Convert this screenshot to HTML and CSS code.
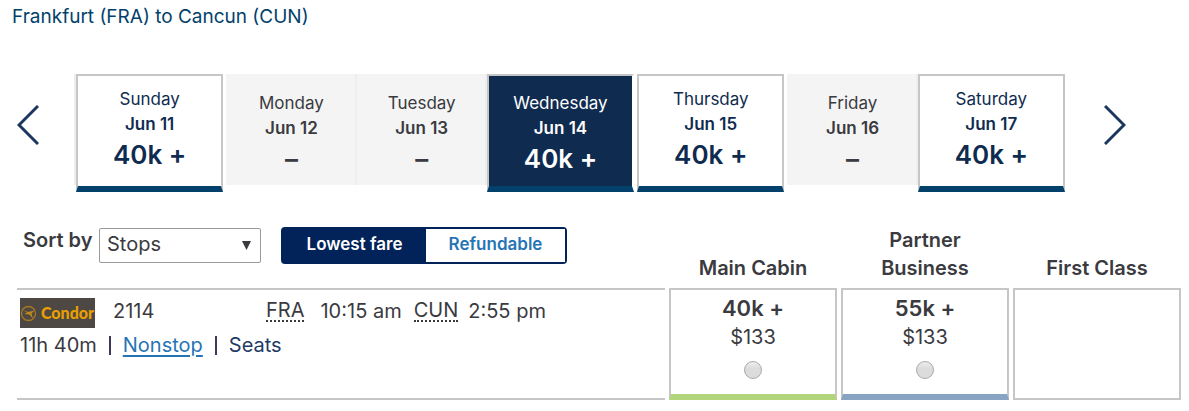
FILE: index.html
```html
<!DOCTYPE html>
<html lang="en">
<head>
<meta charset="utf-8">
<meta name="viewport" content="width=device-width, initial-scale=1">
<title>Frankfurt (FRA) to Cancun (CUN)</title>
<link rel="stylesheet" href="styles.css">
</head>
<body>
<main>
  <h1 class="route">Frankfurt (FRA) to Cancun (CUN)</h1>

  <nav class="calendar" aria-label="Departure date">
    <button class="arrow" type="button" aria-label="Previous days">
      <svg width="22" height="40" viewBox="0 0 22 40"><path d="M21 1 2 20l19 19"/></svg>
    </button>
    <div class="days">
      <button class="day open" type="button"><span>Sunday</span><b>Jun 11</b><strong>40k +</strong></button>
      <button class="day closed" type="button"><span>Monday</span><b>Jun 12</b><strong>–</strong></button>
      <button class="day closed" type="button"><span>Tuesday</span><b>Jun 13</b><strong>–</strong></button>
      <button class="day open selected" type="button" aria-current="date"><span>Wednesday</span><b>Jun 14</b><strong>40k +</strong></button>
      <button class="day open" type="button"><span>Thursday</span><b>Jun 15</b><strong>40k +</strong></button>
      <button class="day closed" type="button"><span>Friday</span><b>Jun 16</b><strong>–</strong></button>
      <button class="day open" type="button"><span>Saturday</span><b>Jun 17</b><strong>40k +</strong></button>
    </div>
    <button class="arrow" type="button" aria-label="Next days">
      <svg width="22" height="40" viewBox="0 0 22 40"><path d="M1 1l19 19L1 39"/></svg>
    </button>
  </nav>

  <table class="results">
    <colgroup><col><col class="fare-col"><col class="fare-col"><col class="fare-col"></colgroup>
    <thead>
      <tr>
        <td class="tools">
          <div class="toolbar">
            <label for="sort">Sort by</label>
            <div class="picker">
              <select id="sort"><option>Stops</option></select>
              <svg width="9" height="9" viewBox="0 0 9 9"><path d="M0 0h9L4.500 9z"/></svg>
            </div>
            <div class="toggle">
              <button class="on" type="button" aria-pressed="true">Lowest fare</button>
              <button type="button" aria-pressed="false">Refundable</button>
            </div>
          </div>
        </td>
        <th scope="col">Main Cabin</th>
        <th scope="col">Partner<br>Business</th>
        <th scope="col">First Class</th>
      </tr>
    </thead>
    <tbody>
      <tr>
        <td class="flight">
          <div class="leg">
            <svg class="logo" width="75" height="30" viewBox="0 0 75 30" role="img" aria-label="Condor">
              <rect width="75" height="30" fill="#4d4844"/>
              <circle cx="8.500" cy="15.500" r="7" fill="none" stroke="#a87a20" stroke-width="1.300"/>
              <path d="M2.500 12l5.500 2 6.500-1.500-3 3 1.500 4.500-2.500-2-1-1.500-5-.5 2.500-1.500z" fill="#c08a1a"/>
              <text x="21" y="21">Condor</text>
            </svg>
            <span class="number">2114</span>
            <abbr title="Frankfurt">FRA</abbr>
            <span class="depart">10:15 am</span>
            <abbr title="Cancun">CUN</abbr>
            <span class="arrive">2:55 pm</span>
          </div>
          <div class="facts">
            <span>11h 40m</span><i></i><a class="stops" href="#">Nonstop</a><i></i><a class="seats" href="#">Seats</a>
          </div>
        </td>
        <td class="fare main">
          <label><strong>40k +</strong><span>$133</span><input type="radio" name="fare"></label>
        </td>
        <td class="fare business">
          <label><strong>55k +</strong><span>$133</span><input type="radio" name="fare"></label>
        </td>
        <td class="fare"></td>
      </tr>
    </tbody>
  </table>
</main>
</body>
</html>
```

FILE: styles.css
```css
* { box-sizing: border-box; }

body {
  margin: 0;
  background: #fff;
  color: #3a3a3f;
  font-family: Inter, "Liberation Sans", sans-serif;
  font-size: 20px;
}

button, select { font-family: inherit; color: inherit; }

.route {
  margin: 0;
  padding: 5px 12px 0;
  color: #02416b;
  font-size: 19px;
  font-weight: 400;
  line-height: 24px;
}

.calendar {
  display: flex;
  margin: 45px 63px 0 17px;
}

.arrow {
  flex: none;
  align-self: flex-start;
  margin-top: 31px;
  padding: 0;
  border: 0;
  background: none;
}

.arrow svg { display: block; }

.arrow path {
  fill: none;
  stroke: #1c375f;
  stroke-width: 3;
}

.days {
  display: flex;
  flex: 1;
  align-items: flex-start;
  margin: 0 39px 0 35px;
  padding-left: 2px;
  background: linear-gradient(#eee, #eee) 0 0 / 2px 111px no-repeat;
}

.day {
  display: flex;
  flex: 130 1 130px;
  flex-direction: column;
  align-items: center;
  min-width: 0;
  height: 111px;
  padding: 17px 0 0;
  border: 0;
  background: #f4f4f4;
  text-align: center;
}

.closed { box-shadow: inset -2px 0 #eee; }

.day span { font-size: 17px; line-height: 25px; }
.day b { font-size: 17px; font-weight: 600; line-height: 25px; }
.day strong { font-size: 26px; font-weight: 600; line-height: 36px; }

.open {
  flex: 147 1 147px;
  height: 118px;
  padding-top: 11px;
  border: 2px solid #c6c6c6;
  border-bottom: 6px solid #02416b;
  background: #fff;
  color: #0f2b50;
}

.open + .day { margin-left: 3px; }

.selected {
  padding-top: 15px;
  border-right-color: #fff;
  background: #0f2b50;
  color: #fff;
}

.results {
  width: calc(100% - 17px);
  margin: 30px 4px 0 13px;
  border-spacing: 4px;
  table-layout: fixed;
}

.fare-col { width: 168px; }

.results td, .results th { padding: 0; }

.results th {
  padding-bottom: 2px;
  font-size: 20px;
  font-weight: 600;
  line-height: 28px;
  vertical-align: bottom;
}

.tools { height: 58px; vertical-align: top; }

.results .tools { padding-top: 1px; }

.toolbar {
  display: flex;
  align-items: flex-start;
  padding-left: 6px;
}

.toolbar label {
  width: 76px;
  font-size: 20px;
  font-weight: 600;
  line-height: 26px;
}

.picker {
  display: grid;
  align-items: center;
  width: 162px;
  margin-top: 1px;
}

.picker > * { grid-area: 1 / 1; }

.picker select {
  width: 100%;
  height: 35px;
  padding: 0 7px 4px;
  border: 1px solid #999;
  border-radius: 2px;
  appearance: none;
  background: #fff;
  font-size: 20px;
}

.picker svg {
  justify-self: end;
  margin-right: 10px;
  fill: #3a3a3f;
  pointer-events: none;
}

.toggle {
  display: flex;
  width: 286px;
  height: 37px;
  margin-left: 20px;
  border: 2px solid #01235a;
  border-radius: 4px;
}

.toggle button {
  flex: 139 1 0;
  padding: 0 0 3px;
  border: 0;
  background: #fff;
  color: #2774b5;
  font-size: 17px;
  font-weight: 600;
}

.toggle .on {
  flex-grow: 143;
  background: #01235a;
  color: #fff;
}

.flight {
  height: 112px;
  border-top: 2px solid #c6c6c6;
  border-bottom: 2px solid #c6c6c6;
  vertical-align: top;
}

.leg {
  display: flex;
  align-items: center;
  height: 38px;
  padding: 8px 0 0 3px;
  line-height: 24px;
}

.logo text {
  fill: #e8a000;
  font-family: Lato, sans-serif;
  font-size: 16px;
  font-weight: 900;
}

.leg > span, .leg > abbr { margin-top: -4px; }

.number { width: 153px; margin-left: 18px; }

abbr { border-bottom: 2px dotted #3a3a3f; text-decoration: none; line-height: 20px; }

.depart { margin: 0 12px 0 16px; }
.arrive { margin-left: 10px; }

.facts {
  display: flex;
  align-items: center;
  padding: 5px 0 0 3px;
  line-height: 24px;
}

.facts i {
  width: 2px;
  height: 19px;
  margin: 0 12px;
  background: #3a3a5a;
}

.stops { color: #2774b5; text-underline-offset: 3px; text-decoration-thickness: 2px; }
.seats { color: #1f3a66; text-decoration: none; }

.fare {
  border: 2px solid #c6c6c6;
  text-align: center;
  vertical-align: top;
}

.main { border-bottom: 6px solid #b2d57c; }
.business { border-bottom: 6px solid #88a4c2; }

.fare label {
  display: flex;
  flex-direction: column;
  align-items: center;
  padding-top: 4px;
}

.fare strong { font-size: 22px; font-weight: 600; line-height: 28px; }
.fare span { line-height: 30px; }

.fare input {
  width: 18px;
  height: 18px;
  margin: 9px 0 0;
  border: 1px solid #aaa;
  border-radius: 50%;
  appearance: none;
  background: linear-gradient(#eee, #dcdcdc 40%);
}

.fare input:checked { background: #01235a; }
```
